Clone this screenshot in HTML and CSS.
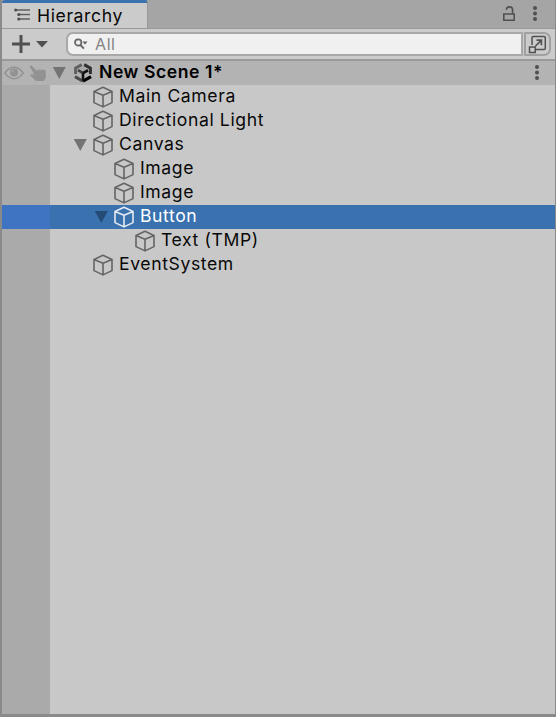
FILE: index.html
```html
<!DOCTYPE html>
<html lang="en">
<head>
<meta charset="UTF-8" />
<meta name="viewport" content="width=device-width, initial-scale=1" />
<title>Hierarchy</title>
<link rel="stylesheet" href="styles.css">
</head>
<body>
  <svg class="defs" width="0" height="0">
    <symbol id="cube" viewBox="0 0 22 22">
      <path d="M11 1.3 20 5.4V16.6L11 20.9 2 16.6V5.4ZM2 5.4 11 9.3 20 5.4M11 9.3V20.9" fill="none" stroke="currentColor" stroke-width="1.6" stroke-linejoin="round" />
    </symbol>
    <symbol id="arrow" viewBox="0 0 14 12">
      <path d="M.8 0H13.8L7.3 12Z" fill="currentColor" />
    </symbol>
    <symbol id="dots" viewBox="0 0 6 18">
      <circle cx="3" cy="3" r="2" /><circle cx="3" cy="8.5" r="2" /><circle cx="3" cy="14" r="2" />
    </symbol>
  </svg>

  <div class="panel">
    <header class="tabs">
      <div class="tab">
        <svg class="tab-icon" width="18" height="16" viewBox="0 0 18 16">
          <path d="M2 3H16M5 7.5H16M5 12H16" stroke="#606060" stroke-width="1.3" />
          <circle cx="1.7" cy="3" r="1.6" fill="#505050" />
          <circle cx="4.8" cy="7.5" r="1.6" fill="#505050" />
          <circle cx="4.8" cy="12" r="1.6" fill="#505050" />
        </svg>
        <span>Hierarchy</span>
      </div>
      <svg class="lock" width="14" height="16" viewBox="0 0 14 16">
        <path d="M1.8 8H12.2V14.2H1.8ZM10.6 8V4.2A3 3 0 0 0 4.4 3.8" fill="none" stroke="#505050" stroke-width="1.6" />
      </svg>
      <svg class="dots" width="6" height="18"><use href="#dots" /></svg>
    </header>

    <div class="toolbar">
      <button class="add-btn" aria-label="Create">
        <svg width="38" height="20" viewBox="0 0 38 20">
          <path d="M10 1V19M1 10H19" stroke="#505050" stroke-width="3" />
          <path d="M25 7H37L31 13.5Z" fill="#505050" />
        </svg>
      </button>
      <div class="search">
        <svg width="15" height="12" viewBox="0 0 15 12">
          <circle cx="4.2" cy="4.5" r="3.2" fill="none" stroke="#666" stroke-width="1.7" />
          <path d="M6.5 7 9.9 10.6" stroke="#666" stroke-width="2" />
          <path d="M8.5 3.5H13.5L11 6.7Z" fill="#666" />
        </svg>
        <span>All</span>
      </div>
      <button class="picker-btn" aria-label="Open search">
        <svg width="19" height="19" viewBox="0 0 19 19">
          <path d="M4 10V2.8Q4 1.5 5.3 1.5H16Q17.3 1.5 17.3 2.8V13.2Q17.3 14.5 16 14.5H8M1.5 12H7.3V17.5H1.5Z" fill="none" stroke="#505050" stroke-width="1.5" />
          <path d="M7.5 11 13 5.7M8.5 5.2H13.4V10.3" fill="none" stroke="#505050" stroke-width="1.7" />
        </svg>
      </button>
    </div>

    <div class="scene">
      <svg class="eye" width="20" height="14" viewBox="0 0 20 14">
        <path d="M.7 7Q10-4.5 19.3 7 10 18.5.7 7Z" fill="none" stroke="#929292" stroke-width="1.3" />
        <circle cx="10" cy="6.5" r="4" fill="#929292" />
        <path d="M8 6A2.3 2.3 0 0 1 10 4.2" fill="none" stroke="#b3b3b3" />
      </svg>
      <svg class="hand" width="18" height="17" viewBox="0 0 18 17">
        <path d="M.6 1.2Q1.8-.2 3 1L8 6 8.5 4.8 10.4 4.6 11.2 5.4 12.3 4.2 13.8 5 15 4.4 16.8 6V12.5L15 16H7L1.5 10.8Q1.3 9.4 2.8 9.3L5.4 9.8Z" fill="#929292" />
      </svg>
      <svg class="arrow" width="14" height="12"><use href="#arrow" /></svg>
      <svg class="unity" width="20" height="22" viewBox="0 0 20 22">
        <!-- open hexagon with a Y in the middle, shaded from grey to black -->
        <path d="M8.8 2.6 2.6 6.1V12" fill="none" stroke="#606060" stroke-width="3" />
        <path d="M11.2 2.6 17.4 6.1V12" fill="none" stroke="#303030" stroke-width="3" />
        <path d="M2 14.6 10 19.2" stroke="#4a4a4a" stroke-width="3" />
        <path d="M10 19.2 18 14.6" stroke="#000" stroke-width="3.2" />
        <path d="M5 8.2 10 11.1V18" fill="none" stroke="#3c3c3c" stroke-width="2.6" />
        <path d="M15 8.2 10 11.1" stroke="#111" stroke-width="2.8" />
        <path d="M10 11V18.5" stroke="#111" stroke-width="2.2" />
        <path d="M6.6 6.7 10 4.8 13.4 6.7 10 8.7Z" fill="#a6a6a6" />
      </svg>
      <span class="scene-name">New Scene 1*</span>
      <svg class="dots" width="6" height="18"><use href="#dots" /></svg>
    </div>

    <div class="tree">
      <div class="row level-1">
        <svg class="cube" width="22" height="22"><use href="#cube" /></svg>
        <span>Main Camera</span>
      </div>
      <div class="row level-1">
        <svg class="cube" width="22" height="22"><use href="#cube" /></svg>
        <span>Directional Light</span>
      </div>
      <div class="row level-1 open">
        <svg class="arrow" width="14" height="12"><use href="#arrow" /></svg>
        <svg class="cube" width="22" height="22"><use href="#cube" /></svg>
        <span>Canvas</span>
      </div>
      <div class="row level-2">
        <svg class="cube" width="22" height="22"><use href="#cube" /></svg>
        <span>Image</span>
      </div>
      <div class="row level-2">
        <svg class="cube" width="22" height="22"><use href="#cube" /></svg>
        <span>Image</span>
      </div>
      <div class="row level-2 open selected">
        <svg class="arrow" width="14" height="12"><use href="#arrow" /></svg>
        <svg class="cube" width="22" height="22"><use href="#cube" /></svg>
        <span>Button</span>
      </div>
      <div class="row level-3">
        <svg class="cube" width="22" height="22"><use href="#cube" /></svg>
        <span>Text (TMP)</span>
      </div>
      <div class="row level-1">
        <svg class="cube" width="22" height="22"><use href="#cube" /></svg>
        <span>EventSystem</span>
      </div>
    </div>
  </div>
</body>
</html>
```
FILE: styles.css
```css
:root {
  --bg: #c8c8c8;
  --gutter: #aaaaaa;
  --toolbar: #cbcbcb;
  --edge: #8a8a8a;
  --line: #999999;
  --icon: #505050;
  --selected: #3a72b0;
  --selected-gutter: #3e74c2;
}

* {
  box-sizing: border-box;
}

body {
  margin: 0;
  height: 100vh;
  overflow: hidden;
  font-family: Inter, sans-serif;
  font-size: 17.6px;
  letter-spacing: 0.6px;
  color: #090909;
}

svg {
  display: block;
  flex: none;
}

.defs {
  position: absolute;
}

.panel {
  height: 100%;
  display: flex;
  flex-direction: column;
  border: solid var(--edge);
  border-width: 0 1px 3px 2px;
  background: var(--bg);
}

.tabs {
  height: 28px;
  display: flex;
  align-items: center;
  padding-right: 17px;
  background: #a5a5a5;
}

.tab {
  width: 146px;
  height: 28px;
  display: flex;
  align-items: center;
  gap: 5px;
  padding-left: 12px;
  margin-right: auto;
  border-top: 3px solid #3a72b0;
  border-right: 1px solid var(--line);
  border-radius: 3px 3px 0 0;
  background: var(--toolbar);
}

.tab-icon {
  margin-bottom: 2px;
}

.tab span {
  padding-bottom: 1px;
}

.lock {
  margin-right: 16px;
}

.dots {
  fill: var(--icon);
}

.toolbar {
  height: 33px;
  display: flex;
  align-items: center;
  padding: 0 4px 0 9px;
  border-top: 1px solid var(--line);
  border-bottom: 2px solid var(--line);
  background: var(--toolbar);
}

button {
  padding: 0;
  border: none;
  background: none;
}

.add-btn {
  margin-right: 17px;
}

.search {
  flex: 1;
  height: 24px;
  display: flex;
  align-items: center;
  gap: 6px;
  padding-left: 6px;
  border: 2px solid #a8a8a8;
  border-radius: 7px 0 0 7px;
  background: #f0f0f0;
  color: #838383;
  font-size: 16px;
}

.picker-btn {
  width: 27px;
  height: 24px;
  display: flex;
  align-items: center;
  justify-content: center;
  margin-left: 1px;
  border: 2px solid #a0a0a0;
  border-radius: 0 7px 7px 0;
}

.scene {
  height: 24px;
  display: flex;
  align-items: center;
  padding: 0 15px 0 2px;
  background: #b3b3b3;
  font-weight: 600;
}

.hand {
  margin: 0 5px;
}

.arrow {
  color: #737373;
}

.unity {
  margin: 0 6px 0 7px;
}

.scene-name {
  margin: 0 auto 3px 0;
  color: #000;
  letter-spacing: 0.55px;
}

.tree {
  flex: 1;
  background: linear-gradient(to right, var(--gutter) 48px, var(--bg) 48px);
}

.row {
  height: 24px;
  display: flex;
  align-items: center;
  line-height: 22px;
}

.row span {
  padding-bottom: 2px;
}

.row .cube {
  margin-right: 5px;
  color: #656565;
}

.row .arrow {
  margin-right: 5px;
}

.level-1 {
  padding-left: 90px;
}

.level-2 {
  padding-left: 111px;
}

.level-3 {
  padding-left: 132px;
}

.level-1.open {
  padding-left: 71px;
}

.level-2.open {
  padding-left: 92px;
}

.row.selected {
  background: linear-gradient(to right, var(--selected-gutter) 48px, var(--selected) 48px);
  color: #fff;
}

.selected .cube {
  color: #e4eaf2;
}

.selected .arrow {
  color: #244a75;
}
```
